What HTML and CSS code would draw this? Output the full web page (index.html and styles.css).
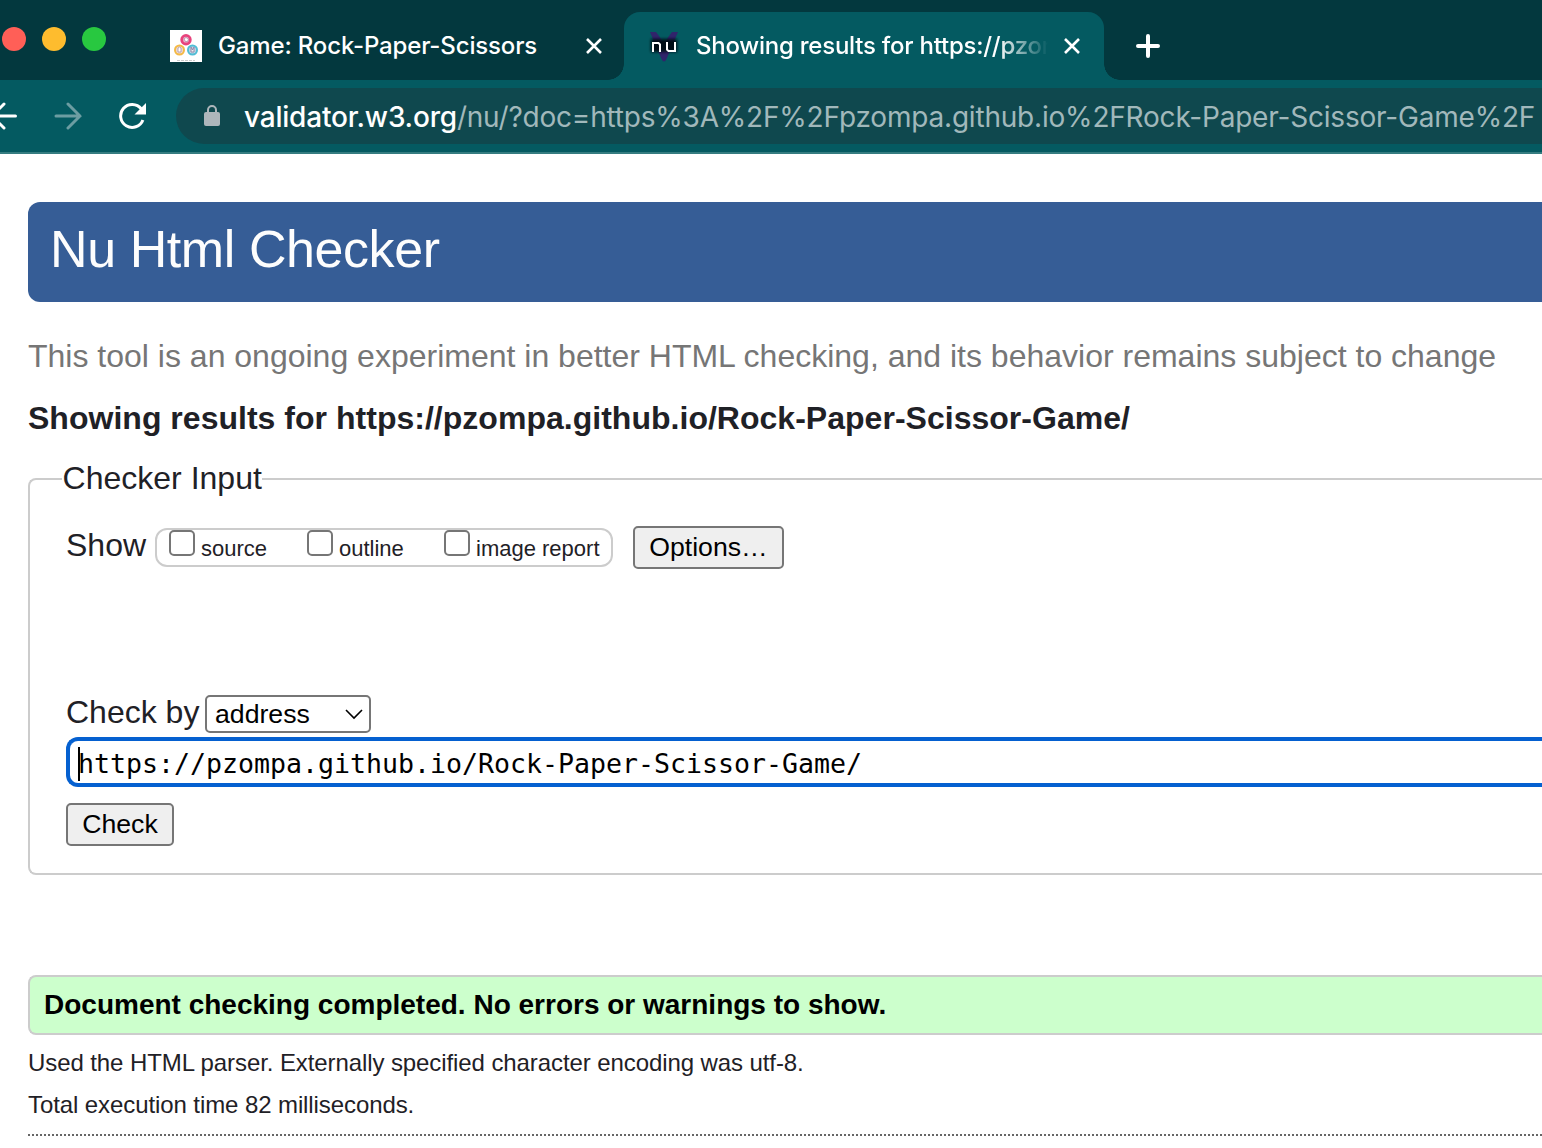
FILE: index.html
```html
<!DOCTYPE html>
<html lang="en">
<head>
<meta charset="utf-8">
<title>Showing results for https://pzompa.github.io/Rock-Paper-Scissor-Game/</title>
<link rel="stylesheet" href="styles.css">
</head>
<body>
<header class="browser">
  <div class="tabstrip">
    <div class="lights"><span class="light red"></span><span class="light amber"></span><span class="light green"></span></div>
    <div class="tab">
      <svg class="favicon" viewBox="0 0 32 32"><rect width="32" height="32" fill="#fff"/><circle cx="16" cy="9.700" r="4.300" fill="#e9b3cb" stroke="#e8437c" stroke-width="2.800"/><path d="M14 9l2-1.500 2.500 1.500-1 2.500h-2z" fill="#fff" stroke="#9c7394" stroke-width=".6"/><circle cx="9.500" cy="20" r="4.500" fill="#ecd9d6" stroke="#f4ba45" stroke-width="2"/><path d="M8 22v-4l1.500-1 1.500 1v4z" fill="#fff" stroke="#a893a5" stroke-width=".8"/><circle cx="22.500" cy="20" r="4.500" fill="#c4d5e4" stroke="#50bdd5" stroke-width="2"/><path d="M21 17l1.500 3 1.500-3v5h-3z" fill="#eee" stroke="#87799f" stroke-width=".8"/><path d="M7 30.500h18" stroke="#ccc" stroke-width="1" stroke-dasharray="3 1"/></svg>
      <span class="tab-title">Game: Rock-Paper-Scissors</span>
      <svg class="close" viewBox="0 0 18 18"><path d="M2 2l14 14M16 2L2 16"/></svg>
    </div>
    <div class="tab active">
      <svg class="favicon" viewBox="0 0 32 32"><defs><filter id="glow" x="-30%" y="-50%" width="160%" height="200%"><feGaussianBlur stdDeviation="1.800"/></filter></defs><path d="M2 2h6l3 4 5 8 5-8 3-4h6L18.500 29q-2.500 5-5 0z" fill="#30246b"/><rect x="3" y="9" width="26" height="13" fill="#000c18" filter="url(#glow)"/><path d="M5 22v-9h5.500l1.500 1.500V22M19 12v7.500l1.500 1.500H27v-9" fill="none" stroke="#fff" stroke-width="2"/></svg>
      <span class="tab-title">Showing results for https://pzom</span>
      <svg class="close" viewBox="0 0 18 18"><path d="M2 2l14 14M16 2L2 16"/></svg>
    </div>
    <svg class="new-tab" viewBox="0 0 24 24"><path d="M12 2v20M2 12h20"/></svg>
  </div>
  <div class="toolbar">
    <svg class="nav back" viewBox="0 0 28 28"><path d="M25.500 14H2M14 2L2 14l12 12"/></svg>
    <svg class="nav forward" viewBox="0 0 28 28"><path d="M2 14h24M14 2l12 12-12 12"/></svg>
    <svg class="nav reload" viewBox="0 0 28 28"><path d="M23.200 6.800A11.500 11.500 0 1 0 24.900 18"/><path class="tip" d="M28 1v11.500H16.500z"/></svg>
    <div class="omnibox">
      <svg class="lock" viewBox="0 0 16 22"><path d="M4 8V5a4 4 0 0 1 8 0v3" fill="none" stroke="#aeb6bb" stroke-width="2"/><rect y="7" width="16" height="14" rx="2" fill="#aeb6bb"/></svg>
      <span class="url"><span class="host">validator.w3.org</span>/nu/?doc=https%3A%2F%2Fpzompa.github.io%2FRock-Paper-Scissor-Game%2F</span>
    </div>
  </div>
</header>
<main class="page">
  <h1 class="banner">Nu Html Checker</h1>
  <p class="tagline">This tool is an ongoing experiment in better HTML checking, and its behavior remains subject to change</p>
  <h2 class="subject">Showing results for https://pzompa.github.io/Rock-Paper-Scissor-Game/</h2>
  <fieldset class="inputs">
    <legend>Checker Input</legend>
    <div class="show-row">
      <span class="label show">Show</span>
      <div class="checks">
        <label class="check source"><input type="checkbox"><span>source</span></label>
        <label class="check outline"><input type="checkbox"><span>outline</span></label>
        <label class="check report"><input type="checkbox"><span>image report</span></label>
      </div>
      <button class="button options">Options…</button>
    </div>
    <div class="by-row">
      <span class="label by">Check by</span>
      <div class="select"><span>address</span><svg viewBox="0 0 18 12"><path d="M1 2l8 8 8-8"/></svg></div>
    </div>
    <div class="address"><span class="caret"></span><span>https://pzompa.github.io/Rock-Paper-Scissor-Game/</span></div>
    <button class="button submit">Check</button>
  </fieldset>
  <p class="success">Document checking completed. No errors or warnings to show.</p>
  <p class="detail parser">Used the HTML parser. Externally specified character encoding was utf-8.</p>
  <p class="detail time">Total execution time 82 milliseconds.</p>
  <div class="rule"></div>
</main>
</body>
</html>
```
FILE: styles.css
```css
* { box-sizing: border-box; }
body {
  margin: 0;
  width: 1542px;
  height: 1148px;
  overflow: hidden;
  background: #fff;
  color: #1f2126;
  font-family: "Liberation Sans", Arial, sans-serif;
  font-size: 32px;
  line-height: 36px;
}
h1, h2, p { margin: 0; white-space: nowrap; }
svg { display: block; flex: none; }

.browser { font-family: Inter, sans-serif; color: #fff; }
.tabstrip { display: flex; height: 80px; background: #03383e; }
.lights { display: flex; gap: 16px; padding: 27px 0 0 2px; width: 154px; }
.light { width: 24px; height: 24px; border-radius: 50%; }
.red { background: #ff5f57; }
.amber { background: #febc2e; }
.green { background: #28c840; }
.tab {
  display: flex;
  align-items: center;
  position: relative;
  width: 470px;
  height: 68px;
  margin-top: 12px;
  padding: 0 21px 0 16px;
}
.tab.active {
  width: 480px;
  padding-left: 24px;
  padding-right: 23px;
  background: #045a61;
  border-radius: 16px 16px 0 0;
}
.tab.active::before, .tab.active::after {
  content: "";
  position: absolute;
  bottom: 0;
  width: 16px;
  height: 16px;
}
.tab.active::before { left: -16px; background: radial-gradient(circle at 0 0, transparent 15.500px, #045a61 16px); }
.tab.active::after { right: -16px; background: radial-gradient(circle at 100% 0, transparent 15.500px, #045a61 16px); }
.favicon { width: 32px; height: 32px; }
.tab-title {
  flex: 1;
  margin: 0 15px 0 16px;
  white-space: nowrap;
  font-size: 24px;
  font-weight: 500;
  letter-spacing: -0.15px;
}
.active .tab-title {
  min-width: 0;
  letter-spacing: -0.24px;
  -webkit-mask-image: linear-gradient(to right, #000 calc(100% - 50px), transparent);
  mask-image: linear-gradient(to right, #000 calc(100% - 50px), transparent);
}
.close { width: 18px; height: 18px; fill: none; stroke: #fff; stroke-width: 2.6; }
.new-tab { width: 24px; height: 24px; margin: 34px 0 0 32px; fill: none; stroke: #fff; stroke-width: 4; stroke-linecap: round; }
.toolbar {
  display: flex;
  align-items: center;
  height: 74px;
  background: #045a61;
  border-bottom: 2px solid #357c80;
}
.nav { width: 28px; height: 28px; fill: none; stroke: #fff; stroke-width: 3; }
.back { margin-left: -10px; stroke-linecap: round; }
.forward { margin-left: 36px; stroke: #6c9da2; stroke-linecap: round; }
.reload { margin-left: 36px; }
.tip { fill: #fff; stroke: none; }
.omnibox {
  display: flex;
  align-items: center;
  width: 1366px;
  height: 56px;
  margin-left: 30px;
  padding-left: 28px;
  background: #0f484e;
  border-radius: 28px 0 0 28px;
  color: #a1b8bb;
}
.lock { width: 16px; height: 22px; }
.url { margin-left: 24px; padding-top: 1px; font-size: 28px; white-space: nowrap; letter-spacing: -0.2px; }
.host { color: #fff; font-weight: 500; }

.page { padding: 48px 0 0 28px; }
.banner {
  height: 100px;
  padding: 18px 0 0 22px;
  background: #365d96;
  border-radius: 12px 0 0 12px;
  color: #fdfdfd;
  font-size: 52px;
  font-weight: 400;
  line-height: 58px;
  letter-spacing: -0.42px;
}
.tagline { margin-top: 36px; color: #767676; }
.subject { margin-top: 26px; font-size: 32px; font-weight: 700; letter-spacing: 0.02px; }
.inputs {
  height: 415px;
  min-width: 0;
  margin: 24px 0 0;
  padding: 0 0 0 36px;
  border: 2px solid #ccc;
  border-right: 0;
  border-radius: 8px 0 0 8px;
}
.inputs legend { height: 38px; margin-left: -4px; padding: 0 0 0 0.6px; }
.show-row { display: flex; height: 43px; margin-top: 28px; }
.show { width: 89px; padding-top: 1px; }
.checks {
  display: flex;
  width: 458px;
  height: 39px;
  margin: 2px 20px 0 0;
  padding-left: 12px;
  border: 2px solid #ccc;
  border-radius: 12px;
  font-size: 22px;
  line-height: 25px;
}
.check { display: flex; gap: 6px; white-space: nowrap; }
.source { width: 138px; }
.outline { width: 137px; }
.check input {
  appearance: none;
  flex: none;
  width: 26px;
  height: 26px;
  margin: 0;
  border: 2px solid #767676;
  border-radius: 5px;
  background: #fff;
}
.check span { padding-top: 6px; }
.button {
  display: block;
  height: 43px;
  padding: 0 0 2px;
  border: 2px solid #767676;
  border-radius: 5px;
  background: #efefef;
  color: #000;
  font: 26.67px/36px "Liberation Sans", Arial, sans-serif;
}
.options { width: 151px; }
.by-row { display: flex; height: 42px; margin-top: 126px; align-items: flex-start; }
.by { width: 139px; white-space: nowrap; margin-top: -1px; }
.select {
  display: flex;
  align-items: center;
  justify-content: space-between;
  width: 166px;
  height: 38px;
  padding: 0 6px 0 8px;
  border: 2px solid #767676;
  border-radius: 5px;
  color: #000;
  font-size: 26.67px;
}
.select svg { width: 18px; height: 12px; fill: none; stroke: #000; stroke-width: 1.6; }
.address {
  display: flex;
  align-items: center;
  height: 50px;
  padding: 3px 0 0 8px;
  border: 4px solid #0560d0;
  border-right: 0;
  border-radius: 12px 0 0 12px;
  color: #000;
  font: 26.58px/36px "DejaVu Sans Mono", monospace;
}
.caret { width: 2px; height: 34px; margin-right: -2px; background: #000; }
.submit { width: 108px; margin-top: 16px; }
.success {
  height: 60px;
  margin-top: 100px;
  padding: 10px 0 0 14px;
  border: 2px solid #ccc;
  border-right: 0;
  border-radius: 8px 0 0 8px;
  background: #cfc;
  color: #000;
  font-size: 28px;
  font-weight: 700;
}
.detail { font-size: 24px; line-height: 27px; letter-spacing: -0.09px; }
.parser { margin-top: 14px; }
.time { margin-top: 15px; }
.rule { height: 2px; margin-top: 16px; background: repeating-linear-gradient(to right, #666 0 2px, transparent 2px 4px); }
```
